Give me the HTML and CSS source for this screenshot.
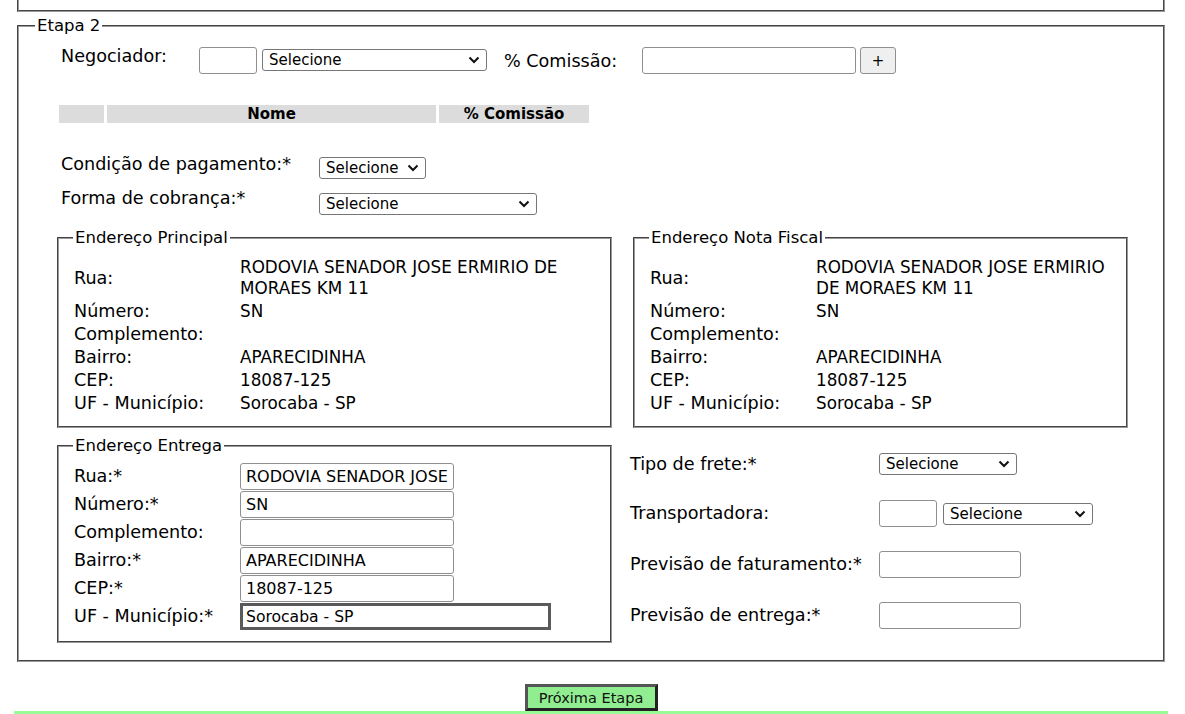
FILE: index.html
```html
<!DOCTYPE html>
<html lang="pt-BR">
<head>
  <meta charset="UTF-8" />
  <title>Pedido - Etapa 2</title>
  <link rel="stylesheet" href="styles.css">
</head>
<body>
<div class="pagina">
  <div class="etapa-anterior"></div>

  <fieldset class="etapa">
    <legend>Etapa 2</legend>
    <div class="conteudo">
      <div class="linha-negociador">
        <label class="rotulo rotulo-negociador">Negociador:</label>
        <input type="text" class="campo campo-codigo">
        <select class="sel sel-negociador"><option>Selecione</option></select>
        <label class="rotulo rotulo-comissao">% Comissão:</label>
        <input type="text" class="campo campo-comissao">
        <button class="btn-add">+</button>
      </div>

      <table class="tabela-negociadores">
        <thead>
          <tr><th class="col-acao"></th><th class="col-nome">Nome</th><th class="col-comissao">% Comissão</th></tr>
        </thead>
      </table>

      <div class="linha-form linha-condicao">
        <label class="rotulo rotulo-largo">Condição de pagamento:*</label>
        <select class="sel sel-condicao"><option>Selecione</option></select>
      </div>
      <div class="linha-form linha-cobranca">
        <label class="rotulo rotulo-largo">Forma de cobrança:*</label>
        <select class="sel sel-cobranca"><option>Selecione</option></select>
      </div>

      <div class="enderecos">
        <fieldset class="endereco">
          <legend>Endereço Principal</legend>
          <div class="dados">
            <span class="rot">Rua:</span><span class="val">RODOVIA SENADOR JOSE ERMIRIO DE MORAES KM 11</span>
            <span class="rot">Número:</span><span class="val">SN</span>
            <span class="rot">Complemento:</span><span class="val"></span>
            <span class="rot">Bairro:</span><span class="val">APARECIDINHA</span>
            <span class="rot">CEP:</span><span class="val">18087-125</span>
            <span class="rot">UF - Município:</span><span class="val">Sorocaba - SP</span>
          </div>
        </fieldset>

        <fieldset class="endereco endereco-nf">
          <legend>Endereço Nota Fiscal</legend>
          <div class="dados">
            <span class="rot">Rua:</span><span class="val">RODOVIA SENADOR JOSE ERMIRIO DE MORAES KM 11</span>
            <span class="rot">Número:</span><span class="val">SN</span>
            <span class="rot">Complemento:</span><span class="val"></span>
            <span class="rot">Bairro:</span><span class="val">APARECIDINHA</span>
            <span class="rot">CEP:</span><span class="val">18087-125</span>
            <span class="rot">UF - Município:</span><span class="val">Sorocaba - SP</span>
          </div>
        </fieldset>

        <fieldset class="endereco endereco-entrega">
          <legend>Endereço Entrega</legend>
          <div class="dados dados-entrega">
            <span class="rot">Rua:*</span><input type="text" class="campo campo-end" value="RODOVIA SENADOR JOSE ERMIRIO DE MORAES KM 11">
            <span class="rot">Número:*</span><input type="text" class="campo campo-end" value="SN">
            <span class="rot">Complemento:</span><input type="text" class="campo campo-end" value="">
            <span class="rot">Bairro:*</span><input type="text" class="campo campo-end" value="APARECIDINHA">
            <span class="rot">CEP:*</span><input type="text" class="campo campo-end" value="18087-125">
            <span class="rot">UF - Município:*</span><input type="text" class="campo-municipio" value="Sorocaba - SP" readonly>
          </div>
        </fieldset>

        <div class="frete">
          <label class="rotulo">Tipo de frete:*</label>
          <div><select class="sel sel-frete"><option>Selecione</option></select></div>

          <label class="rotulo">Transportadora:</label>
          <div class="par">
            <input type="text" class="campo campo-codigo">
            <select class="sel sel-transp"><option>Selecione</option></select>
          </div>

          <label class="rotulo">Previsão de faturamento:*</label>
          <div><input type="text" class="campo campo-data"></div>

          <label class="rotulo">Previsão de entrega:*</label>
          <div><input type="text" class="campo campo-data"></div>
        </div>
      </div>
    </div>
  </fieldset>

  <div class="acoes">
    <button class="btn-proxima">Próxima Etapa</button>
  </div>
  <div class="rodape"></div>
</div>
</body>
</html>
```

FILE: styles.css
```css
body { margin: 0; font-family: "DejaVu Sans", Verdana, sans-serif; color: #000; background: #fff; }
.pagina { margin: 0 20px 0 17px; }

.etapa-anterior {
  height: 10px;
  border: 2px groove #999;
  border-top: none;
}

fieldset { margin: 0; border: 2px groove #999; min-width: 0; }
legend { font-size: 16.5px; padding: 0 2px; line-height: 19px; }

.etapa {
  margin-top: 4px;
  padding: 12px 0 17px 16px;
}
.conteudo { padding-left: 22px; }

.rotulo { font-size: 17.6px; line-height: 21px; }

.campo {
  box-sizing: border-box;
  height: 27px;
  border: 1px solid #8f8f8f;
  border-radius: 3px;
  padding: 0 5px;
  font-family: inherit;
  font-size: 16px;
  background: #fff;
  margin: 0;
}
.sel {
  appearance: none;
  box-sizing: border-box;
  height: 22px;
  font-family: inherit;
  font-size: 15px;
  margin: 0;
  border: 1px solid #767676;
  border-radius: 3px;
  color: #000;
  padding: 0 22px 0 6px;
  background: #fff url("data:image/svg+xml;utf8,<svg xmlns='http://www.w3.org/2000/svg' width='12' height='8' viewBox='0 0 12 8'><path d='M1.5 1.5l4.5 4.5 4.5-4.5' fill='none' stroke='%23111' stroke-width='2'/></svg>") no-repeat right 6px center;
}

/* negociador */
.linha-negociador {
  display: flex;
  align-items: flex-start;
  padding-left: 4px;
}
.rotulo-negociador { width: 138px; margin-top: -1px; }
.campo-codigo { width: 58px; }
.sel-negociador { width: 225px; margin-left: 5px; margin-top: 2px; }
.rotulo-comissao { width: 138px; margin-left: 17px; align-self: center; margin-top: 2px; }
.campo-comissao { width: 214px; }
.btn-add {
  width: 36px;
  height: 27px;
  margin-left: 4px;
  border: 1px solid #8f8f8f;
  border-radius: 3px;
  background: #efefef;
  font-family: inherit;
  font-size: 15px;
  padding: 0;
}

.tabela-negociadores {
  border-collapse: separate;
  border-spacing: 3px 0;
  margin: 31px 0 0 -1px;
}
.tabela-negociadores th {
  background: #dcdcdc;
  height: 18px;
  padding: 0;
  font-size: 15px;
  line-height: 18px;
  text-align: center;
}
.col-acao { width: 45px; }
.col-nome { width: 329px; }
.col-comissao { width: 150px; }

/* condicao / cobranca */
.linha-form { display: flex; align-items: flex-start; padding-left: 4px; }
.rotulo-largo { width: 258px; }
.linha-condicao { margin-top: 31px; }
.linha-condicao .sel { margin-top: 3px; }
.linha-cobranca { margin-top: 9px; }
.linha-cobranca .sel { margin-top: 5px; }
.sel-condicao { width: 107px; }
.sel-cobranca { width: 218px; }

/* enderecos */
.enderecos {
  display: grid;
  grid-template-columns: 555px 498px;
  column-gap: 18px;
  row-gap: 8px;
  margin-top: 13px;
  align-items: start;
}
.endereco { padding: 9px 4px 11px 15px; }
.endereco legend { margin-left: -1px; }
.endereco-nf { margin-left: 3px; width: 495px; box-sizing: border-box; }

.dados {
  display: grid;
  grid-template-columns: 166px 1fr;
  align-items: center;
}
.dados .rot { font-size: 17.6px; line-height: 21px; padding: 1px 0; }
.dados .val { font-size: 16.8px; line-height: 21px; padding: 1px 0; }

.endereco-entrega { padding-top: 8px; padding-bottom: 11px; }
.dados-entrega { row-gap: 1px; }
.campo-end { width: 214px; }
.campo-municipio {
  box-sizing: border-box;
  width: 311px;
  height: 27px;
  border: 3px solid #5a5a5a;
  border-radius: 0;
  padding: 0 3px;
  font-family: inherit;
  font-size: 15.6px;
  margin: 0;
  outline: none;
}

/* frete */
.frete {
  display: grid;
  grid-template-columns: 249px auto;
  grid-template-rows: 24px 27px 27px 27px;
  row-gap: 24px;
  align-items: center;
  padding-top: 16px;
}
.par { display: flex; align-items: center; }
.sel-frete { width: 138px; }
.sel-transp { width: 150px; margin-left: 6px; }
.campo-data { width: 142px; }

/* acoes */
.acoes { text-align: center; padding-top: 22px; line-height: 0; }
.btn-proxima {
  height: 27px;
  width: 133px;
  background: #90ee90;
  border: 3px solid;
  border-color: #555 #222 #222 #555;
  font-family: inherit;
  font-size: 14.5px;
  color: #111;
  padding: 0;
  margin: 0;
}
.rodape {
  margin: 0 -3px;
  border-top: 3px solid #98fb98;
}
```
